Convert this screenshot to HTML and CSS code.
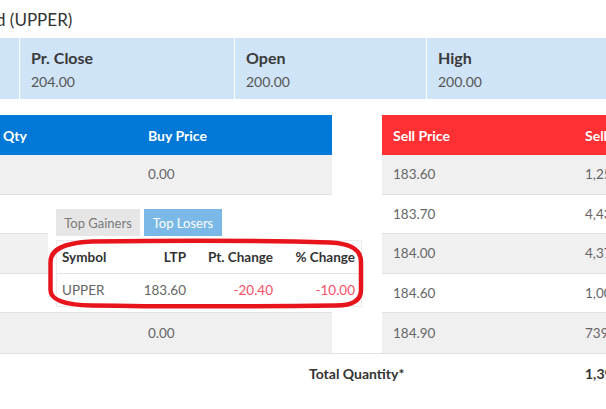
FILE: index.html
```html
<!DOCTYPE html>
<html lang="en">
<head>
    <meta charset="UTF-8">
    <meta name="viewport" content="width=device-width, initial-scale=1.0">
    <title>Market Depth - UPPER</title>
    <link rel="stylesheet" href="styles.css">
</head>
<body>
    <div class="page">
        <h2 class="title">d (UPPER)</h2>

        <!-- Price summary -->
        <div class="stats">
            <div class="stat stat-cut"></div>
            <div class="stat stat-close">
                <span class="stat-label">Pr. Close</span>
                <span class="stat-value">204.00</span>
            </div>
            <div class="stat stat-open">
                <span class="stat-label">Open</span>
                <span class="stat-value">200.00</span>
            </div>
            <div class="stat stat-high">
                <span class="stat-label">High</span>
                <span class="stat-value">200.00</span>
            </div>
        </div>

        <!-- Market depth -->
        <div class="book">
            <div class="side buy">
                <div class="row head"><span class="c-qty">Qty</span><span class="c-price">Buy Price</span></div>
                <div class="row"><span class="c-qty"></span><span class="c-price">0.00</span></div>
                <div class="row"><span class="c-qty"></span><span class="c-price"></span></div>
                <div class="row"><span class="c-qty"></span><span class="c-price"></span></div>
                <div class="row"><span class="c-qty"></span><span class="c-price"></span></div>
                <div class="row"><span class="c-qty"></span><span class="c-price">0.00</span></div>
            </div>
            <div class="side sell">
                <div class="row head"><span class="c-sprice">Sell Price</span><span class="c-sqty">Sell Qty</span></div>
                <div class="row"><span class="c-sprice">183.60</span><span class="c-sqty">1,250</span></div>
                <div class="row"><span class="c-sprice">183.70</span><span class="c-sqty">4,430</span></div>
                <div class="row"><span class="c-sprice">184.00</span><span class="c-sqty">4,370</span></div>
                <div class="row"><span class="c-sprice">184.60</span><span class="c-sqty">1,000</span></div>
                <div class="row"><span class="c-sprice">184.90</span><span class="c-sqty">739</span></div>
            </div>
        </div>
        <div class="total">
            <span class="total-label">Total Quantity*</span>
            <span class="total-value">1,390</span>
        </div>

        <!-- Top gainers / losers popup -->
        <div class="popup">
            <div class="tabs">
                <span class="tab tab-gainers">Top Gainers</span>
                <span class="tab tab-losers active">Top Losers</span>
            </div>
            <div class="movers">
                <div class="mrow mhead">
                    <span>Symbol</span>
                    <span class="num">LTP</span>
                    <span class="num">Pt. Change</span>
                    <span class="num last">% Change</span>
                </div>
                <div class="mrow">
                    <span class="sym">UPPER</span>
                    <span class="num">183.60</span>
                    <span class="num neg">-20.40</span>
                    <span class="num neg last">-10.00</span>
                </div>
            </div>
        </div>

        <!-- hand drawn highlight -->
        <svg class="mark" width="606" height="409" viewBox="0 0 606 409">
            <path d="M92 241.5 C180 240.5 280 241 330 242.5 C352 243.5 361 250 361 262 L361 290 C361 300 353 305.5 336 305.5 C250 306.5 150 306.5 92 305.5 C64 305 50.5 300 50.5 290 L50.5 262 C50.5 250 62 243 92 241.5 Z"
                  fill="none" stroke="#e8141c" stroke-width="4.5" stroke-linejoin="round"/>
        </svg>
    </div>
</body>
</html>
```

FILE: styles.css
```css
html, body {
    margin: 0;
    padding: 0;
    overflow: hidden;
}

body {
    font-family: Lato, "Open Sans", sans-serif;
    color: #333;
    background-color: #fff;
}

.page {
    position: relative;
    width: 640px;
}

.title {
    margin: 0 0 0 -4px;
    padding-top: 9px;
    height: 29px;
    font-size: 17px;
    font-weight: normal;
    line-height: 22px;
    color: #333;
}

/* price summary */
.stats {
    display: flex;
    gap: 1px;
    background-color: #fff;
}

.stat {
    background-color: #cfe4f6;
    padding: 10px 11px 7px;
    height: 44px;
    display: flex;
    flex-direction: column;
    gap: 4px;
}

.stat-cut {
    width: 19px;
    padding: 10px 0 7px;
}

.stat-close {
    width: 192px;
}

.stat-open {
    width: 169px;
}

.stat-high {
    flex: 1;
}

.stat-label {
    font-size: 16px;
    font-weight: bold;
    line-height: 20px;
    color: #3a3a3a;
}

.stat-value {
    font-size: 14px;
    line-height: 20px;
    color: #555;
}

/* market depth */
.book {
    display: flex;
    gap: 50px;
    margin-top: 16px;
}

.side.buy {
    width: 332px;
}

.side.sell {
    flex: 1;
}

.row {
    display: flex;
    align-items: center;
    box-sizing: border-box;
    height: 39.6px;
    border-bottom: 1px solid #dde1e6;
    font-size: 13.5px;
    color: #666;
}

.row:nth-child(even) {
    background-color: #f0f0f0;
}

.row.head {
    height: 40px;
    border-bottom: none;
    color: #fff;
    font-weight: bold;
    font-size: 14px;
}

.buy .row.head {
    background-color: #0078d7;
}

.sell .row.head {
    background-color: #fe3033;
}

.row:last-child {
    border-bottom: none;
}

.c-qty {
    width: 145px;
    padding-left: 3px;
}

.c-sprice {
    width: 192px;
    padding-left: 11px;
}

.c-sqty {
    white-space: nowrap;
}

.total {
    display: flex;
    align-items: center;
    height: 39px;
    border-top: 1px solid #dde1e6;
    font-size: 14px;
    font-weight: bold;
    color: #333;
}

.total-label {
    width: 276px;
    padding-left: 309px;
}

/* popup */
.popup {
    position: absolute;
    left: 48px;
    top: 202px;
    width: 306px;
    height: 95px;
    padding: 7px 8px;
    background-color: #fff;
}

.tabs {
    display: flex;
    gap: 4px;
}

.tab {
    height: 27px;
    line-height: 28px;
    text-align: center;
    font-size: 13px;
    background-color: #e6e6e6;
    color: #7a7a7a;
}

.tab-gainers {
    width: 84px;
}

.tab-losers {
    width: 78px;
}

.tab.active {
    background-color: #7ab8e8;
    color: #fff;
}

.movers {
    margin-top: 4px;
    border: 1px solid #ececec;
}

.mrow {
    display: grid;
    grid-template-columns: 64px 65px 87px 88px;
    align-items: center;
    height: 32px;
    font-size: 13.5px;
    color: #666;
}

.mrow.mhead {
    height: 32px;
    border-bottom: 1px solid #e2e2e2;
    font-weight: bold;
    color: #333;
}

.mrow span:first-child {
    padding-left: 5px;
}

.num {
    text-align: right;
}

.num.last {
    padding-right: 6px;
}

.neg {
    color: #fa5066;
}

.mark {
    position: absolute;
    left: 0;
    top: 0;
    pointer-events: none;
}
```
